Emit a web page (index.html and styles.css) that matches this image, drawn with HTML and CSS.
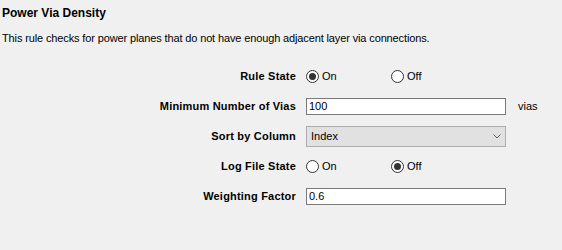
FILE: index.html
```html
<!DOCTYPE html>
<html lang="en">
<head>
    <meta charset="UTF-8">
    <title>Power Via Density</title>
    <link rel="stylesheet" href="styles.css">
</head>
<body>
    <h1 class="rule-title">Power Via Density</h1>
    <p class="rule-desc">This rule checks for power planes that do not have enough adjacent layer via connections.</p>

    <div class="rule-form">
        <label class="field-label">Rule State</label>
        <div class="radio-group">
            <span class="radio-item"><span class="radio checked"></span>On</span>
            <span class="radio-item"><span class="radio"></span>Off</span>
        </div>
        <span></span>

        <label class="field-label">Minimum Number of Vias</label>
        <div class="text-box">100</div>
        <span class="unit">vias</span>

        <label class="field-label">Sort by Column</label>
        <div class="combo-box">
            <span>Index</span>
            <svg class="chevron" width="8" height="5" viewBox="0 0 8 5">
                <path d="M0.5 0.5 L4 4 L7.5 0.5" fill="none" stroke="#606060" stroke-width="1"/>
            </svg>
        </div>
        <span></span>

        <label class="field-label">Log File State</label>
        <div class="radio-group">
            <span class="radio-item"><span class="radio"></span>On</span>
            <span class="radio-item"><span class="radio checked"></span>Off</span>
        </div>
        <span></span>

        <label class="field-label">Weighting Factor</label>
        <div class="text-box">0.6</div>
        <span></span>
    </div>
</body>
</html>
```

FILE: styles.css
```css
body {
    margin: 0;
    background-color: #f0f0f0;
    font-family: "Liberation Sans", Arial, sans-serif;
    font-size: 11px;
    color: #000;
}

.rule-title {
    font-size: 12px;
    font-weight: bold;
    line-height: 16px;
    margin: 5px 0 0 2px;
}

.rule-desc {
    line-height: 14px;
    letter-spacing: -0.13px;
    margin: 10px 0 0 2px;
}

.rule-form {
    display: grid;
    grid-template-columns: 296px 200px auto;
    grid-auto-rows: 30px;
    column-gap: 10px;
    align-items: center;
    margin-top: 16px;
}

.field-label {
    font-weight: bold;
    text-align: right;
    letter-spacing: 0.2px;
}

.radio-group {
    display: flex;
    align-items: center;
}

.radio-item {
    display: flex;
    align-items: center;
    gap: 3px;
}

.radio-item:first-child {
    width: 85px;
}

.radio {
    width: 11px;
    height: 11px;
    border: 1px solid #333;
    border-radius: 50%;
    background-color: #fff;
    position: relative;
}

.radio.checked::after {
    content: "";
    position: absolute;
    left: 2px;
    top: 2px;
    width: 7px;
    height: 7px;
    border-radius: 50%;
    background-color: #333;
}

.text-box {
    box-sizing: border-box;
    height: 17px;
    line-height: 15px;
    padding-left: 2px;
    border: 1px solid #7a7a7a;
    background-color: #fff;
}

.unit {
    margin-left: 2px;
}

.combo-box {
    box-sizing: border-box;
    height: 21px;
    display: flex;
    align-items: center;
    justify-content: space-between;
    padding: 0 4px 0 4px;
    border: 1px solid #adadad;
    background-color: #e1e1e1;
}

.chevron {
    display: block;
}
```
